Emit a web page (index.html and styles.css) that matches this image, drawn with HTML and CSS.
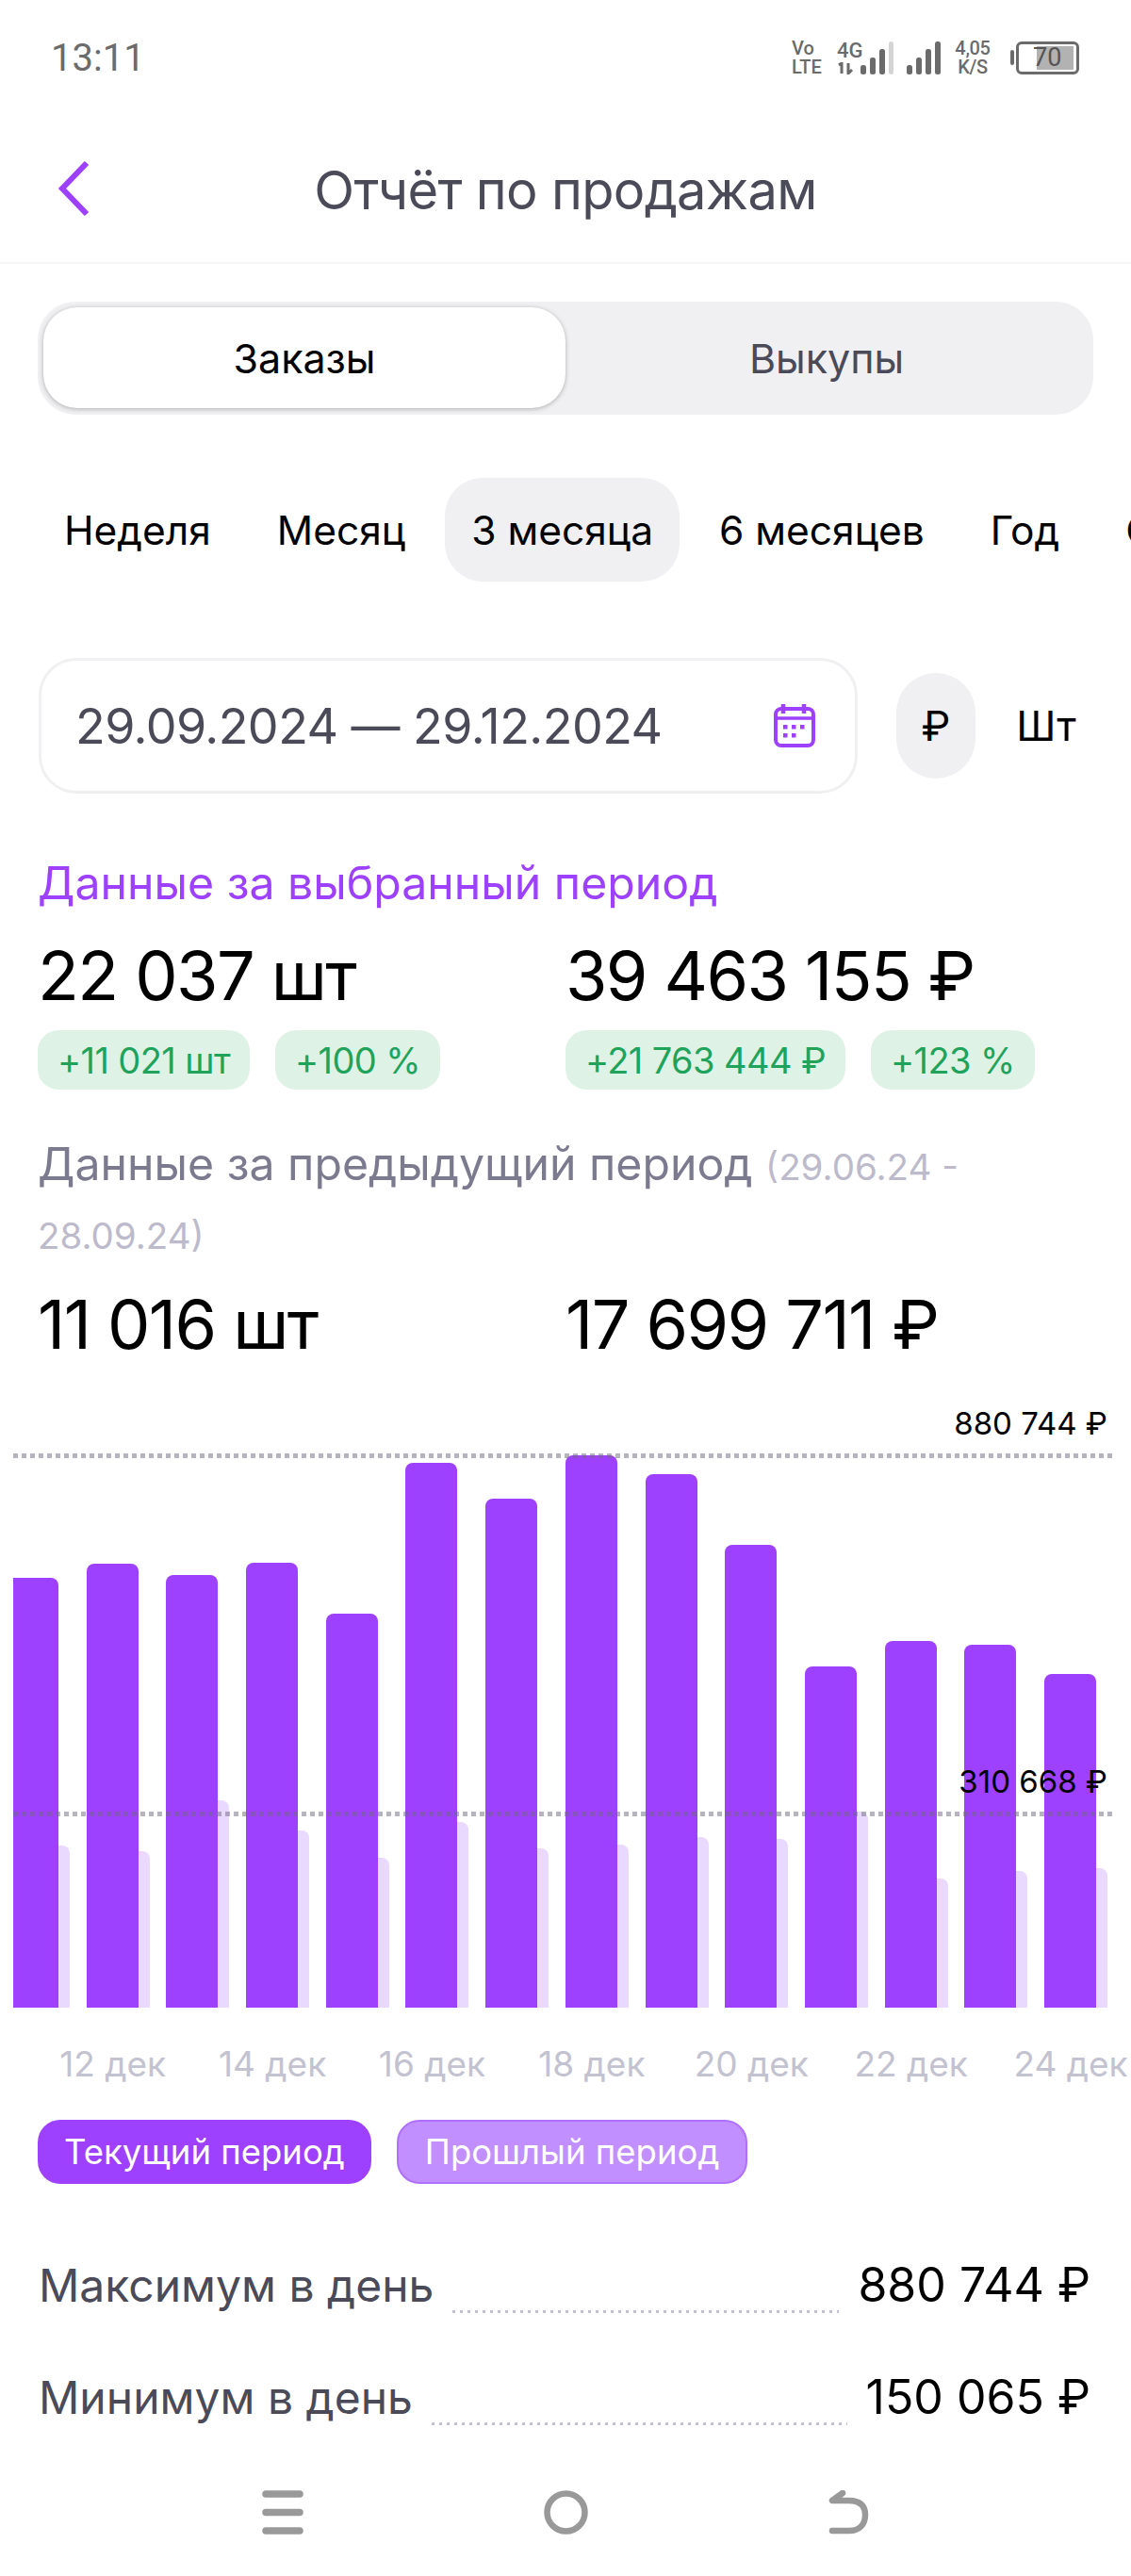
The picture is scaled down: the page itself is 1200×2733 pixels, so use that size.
FILE: index.html
```html
<!DOCTYPE html>
<html lang="ru">
<head>
    <meta charset="UTF-8">
    <meta name="viewport" content="width=device-width, initial-scale=1.0">
    <title>Отчёт по продажам</title>
    <link rel="stylesheet" href="styles.css">
</head>
<body>
    <div class="page">

        <div class="statusbar">
            <span class="time">13:11</span>
            <div class="status-icons">
                <div class="stack volte"><span>Vo</span><span>LTE</span></div>
                <div class="stack net">
                    <span>4G</span>
                    <svg width="18" height="13" viewBox="0 0 18 13"><path d="M2 3l3-2v11M12 1v11l4-4" fill="none" stroke="#6b6b6b" stroke-width="3"/></svg>
                </div>
                <svg class="signal-a" width="36" height="35" viewBox="0 0 36 35">
                    <rect x="0" y="25" width="6" height="10" rx="2.5" fill="#6b6b6b"/>
                    <rect x="10" y="17" width="6" height="18" rx="2.5" fill="#6b6b6b"/>
                    <rect x="20" y="8" width="6" height="27" rx="2.5" fill="#6b6b6b"/>
                    <rect x="30" y="0" width="5" height="35" rx="2.5" fill="#d4d4d4"/>
                </svg>
                <svg class="signal-b" width="36" height="35" viewBox="0 0 36 35">
                    <rect x="0" y="25" width="6" height="10" rx="2.5" fill="#6b6b6b"/>
                    <rect x="10" y="17" width="6" height="18" rx="2.5" fill="#6b6b6b"/>
                    <rect x="20" y="8" width="6" height="27" rx="2.5" fill="#6b6b6b"/>
                    <rect x="30" y="0" width="6" height="35" rx="2.5" fill="#6b6b6b"/>
                </svg>
                <div class="stack speed"><span>4,05</span><span>K/S</span></div>
                <div class="battery">
                    <span class="battery-nub"></span>
                    <div class="battery-body">
                        <span class="battery-fill"></span>
                        <span class="battery-text">70</span>
                    </div>
                </div>
            </div>
        </div>

        <div class="topbar">
            <svg class="back" width="34" height="58" viewBox="0 0 34 58"><path d="M31 2L5 29l26 27" fill="none" stroke="#9d41ff" stroke-width="6"/></svg>
            <h1>Отчёт по продажам</h1>
        </div>

        <div class="segment">
            <div class="segment-item active">Заказы</div>
            <div class="segment-item">Выкупы</div>
        </div>

        <div class="periods">
            <div class="period">Неделя</div>
            <div class="period">Месяц</div>
            <div class="period active">3 месяца</div>
            <div class="period">6 месяцев</div>
            <div class="period">Год</div>
            <div class="period">Свой</div>
        </div>

        <div class="filters">
            <div class="datebox">
                <span class="dates">29.09.2024 — 29.12.2024</span>
                <svg width="46" height="46" viewBox="0 0 46 46">
                    <rect x="3" y="5" width="40" height="39" rx="6" fill="none" stroke="#9d41ff" stroke-width="4"/>
                    <path d="M3 15h40" stroke="#9d41ff" stroke-width="3.500"/>
                    <path d="M11 0v10M33 0v10" stroke="#9d41ff" stroke-width="4.500"/>
                    <path d="M11 22h4.500v4.500H11zM20 22h4.500v4.500H20zM29 22h4.500v4.500H29zM11 31h4.500v4.500H11zM20 31h4.500v4.500H20z" fill="#9d41ff"/>
                </svg>
            </div>
            <div class="unit active">₽</div>
            <div class="unit">Шт</div>
        </div>

        <h2 class="section-title current">Данные за выбранный период</h2>
        <div class="stats">
            <div class="stat">
                <div class="stat-value">22 037 шт</div>
                <div class="badges">
                    <span class="badge">+11 021 шт</span>
                    <span class="badge">+100 %</span>
                </div>
            </div>
            <div class="stat">
                <div class="stat-value">39 463 155 ₽</div>
                <div class="badges">
                    <span class="badge">+21 763 444 ₽</span>
                    <span class="badge">+123 %</span>
                </div>
            </div>
        </div>

        <h2 class="section-title previous">Данные за предыдущий период <span class="range">(29.06.24 - 28.09.24)</span></h2>
        <div class="stats prev-stats">
            <div class="stat-value">11 016 шт</div>
            <div class="stat-value">17 699 711 ₽</div>
        </div>

        <div class="chart">
            <div class="bars">
                <div class="group" style="height:456px"><i style="height:172px"></i><b></b></div>
                <div class="group" style="height:471px"><i style="height:166px"></i><b></b></div>
                <div class="group" style="height:459px"><i style="height:220px"></i><b></b></div>
                <div class="group" style="height:472px"><i style="height:188px"></i><b></b></div>
                <div class="group" style="height:418px"><i style="height:159px"></i><b></b></div>
                <div class="group" style="height:578px"><i style="height:197px"></i><b></b></div>
                <div class="group" style="height:540px"><i style="height:169px"></i><b></b></div>
                <div class="group" style="height:586px"><i style="height:173px"></i><b></b></div>
                <div class="group" style="height:566px"><i style="height:181px"></i><b></b></div>
                <div class="group" style="height:491px"><i style="height:179px"></i><b></b></div>
                <div class="group" style="height:362px"><i style="height:208px"></i><b></b></div>
                <div class="group" style="height:389px"><i style="height:137px"></i><b></b></div>
                <div class="group" style="height:385px"><i style="height:145px"></i><b></b></div>
                <div class="group" style="height:354px"><i style="height:148px"></i><b></b></div>
            </div>
            <div class="gridline top"><span>880 744 ₽</span></div>
            <div class="gridline mid"><span>310 668 ₽</span></div>
        </div>

        <div class="axis">
            <span>12 дек</span>
            <span>14 дек</span>
            <span>16 дек</span>
            <span>18 дек</span>
            <span>20 дек</span>
            <span>22 дек</span>
            <span>24 дек</span>
        </div>

        <div class="legend">
            <span class="legend-item now">Текущий период</span>
            <span class="legend-item past">Прошлый период</span>
        </div>

        <div class="summary">
            <div class="summary-row">
                <span class="summary-label">Максимум в день</span>
                <span class="leader"></span>
                <span class="summary-value">880 744 ₽</span>
            </div>
            <div class="summary-row">
                <span class="summary-label">Минимум в день</span>
                <span class="leader"></span>
                <span class="summary-value">150 065 ₽</span>
            </div>
        </div>

        <div class="navbar">
            <svg width="44" height="47" viewBox="0 0 44 47"><path d="M4 4h36M4 23.500h36M4 43h36" stroke="#999" stroke-width="7.500" stroke-linecap="round"/></svg>
            <svg width="47" height="47" viewBox="0 0 47 47"><circle cx="23.500" cy="23.500" r="20" fill="none" stroke="#999" stroke-width="6.500"/></svg>
            <svg width="44" height="47" viewBox="0 0 44 47"><path d="M15 3L4 11h18c11 0 17 5 17 15s-6 17-17 17H4" fill="none" stroke="#999" stroke-width="6.500" stroke-linecap="round" stroke-linejoin="round"/></svg>
        </div>

    </div>
</body>
</html>
```

FILE: styles.css
```css
body{
    margin: 0;
    background: white;
    font-family: Inter, "Noto Sans", sans-serif;
    color: black;
}
.page{
    width: 1200px;
    height: 2733px;
    overflow: hidden;
}
h1,h2{
    margin: 0;
    font-weight: 400;
}

/* status bar */
.statusbar{
    display: flex;
    justify-content: space-between;
    align-items: center;
    height: 122px;
    padding: 0 55px 0 54px;
    font-family: Roboto, sans-serif;
    color: #6b6b6b;
}
.time{
    font-size: 40px;
    color: #6b6b6b;
}
.status-icons{
    display: flex;
    align-items: center;
    height: 40px;
}
.stack{
    display: flex;
    flex-direction: column;
    font-size: 20px;
    font-weight: 500;
    line-height: 20px;
}
.volte{
    width: 48px;
}
.net{
    width: 25px;
    font-size: 22px;
}
.net svg{
    margin-top: 2px;
}
.signal-b{
    margin-left: 13px;
}
.speed{
    align-items: center;
    margin-left: 13px;
    width: 42px;
    letter-spacing: -.3px;
}
.battery{
    display: flex;
    align-items: center;
    margin-left: 19px;
}
.battery-nub{
    width: 4px;
    height: 16px;
    margin-right: 2px;
    background: #6b6b6b;
    border-radius: 2px;
}
.battery-body{
    position: relative;
    width: 61px;
    height: 29px;
    border: 3px solid #6b6b6b;
    border-radius: 6px;
}
.battery-fill{
    position: absolute;
    left: 19px;
    top: 2px;
    width: 39px;
    height: 25px;
    background: #b2b2b2;
}
.battery-text{
    position: absolute;
    left: 15px;
    top: 0;
    font-size: 27px;
    line-height: 29px;
    color: #555;
}

/* top bar */
.topbar{
    position: relative;
    display: flex;
    justify-content: center;
    align-items: center;
    box-sizing: border-box;
    height: 158px;
    padding-top: 3px;
    border-bottom: 2px solid #f4f4f6;
}
.topbar h1{
    font-size: 56px;
    letter-spacing: -.7px;
    color: #4b4a58;
}
.back{
    position: absolute;
    left: 61px;
    top: 49px;
}

/* orders / buyouts switch */
.segment{
    display: grid;
    grid-template-columns: 1fr 1fr;
    height: 107px;
    margin: 40px 40px 0;
    padding: 6px 6px 7px;
    background: #f0f0f2;
    border-radius: 40px;
}
.segment-item{
    display: flex;
    align-items: center;
    justify-content: center;
    font-size: 43px;
    color: #4b4a58;
}
.segment-item.active{
    background: white;
    color: black;
    border-radius: 36px;
    box-shadow: 0 1px 5px rgba(0,0,0,.28);
}

/* period chips */
.periods{
    display: flex;
    gap: 14px;
    height: 110px;
    margin-top: 67px;
    padding-left: 40px;
    overflow: hidden;
}
.period{
    display: flex;
    align-items: center;
    flex: none;
    padding: 0 28px;
    font-size: 42.5px;
    border-radius: 40px;
}
.period.active{
    background: #f0f0f2;
}

/* date and unit */
.filters{
    display: flex;
    align-items: center;
    margin: 81px 0 0 41px;
}
.datebox{
    display: flex;
    align-items: center;
    justify-content: space-between;
    box-sizing: border-box;
    width: 869px;
    height: 144px;
    padding: 0 41px 0 36px;
    border: 3px solid #f0f0f2;
    border-radius: 40px;
}
.dates{
    font-size: 52px;
    letter-spacing: -.55px;
    color: #4b4a58;
}
.unit{
    display: flex;
    align-items: center;
    justify-content: center;
    width: 84px;
    height: 112px;
    margin-left: 33px;
    font-size: 44px;
    border-radius: 42px;
}
.unit.active{
    margin-left: 41px;
    background: #f0f0f2;
}

/* totals */
.section-title{
    margin: 0 40px;
    font-size: 48.2px;
    line-height: 70px;
}
.section-title.current{
    margin-top: 60px;
    color: #9d41ff;
}
.section-title.previous{
    margin-top: 44px;
    color: #7c7a8e;
}
.range{
    font-size: 38.5px;
    color: #bcbacb;
}
.stats{
    display: grid;
    grid-template-columns: 560px 560px;
    margin: 23px 0 0 40px;
}
.prev-stats{
    margin-top: 19px;
}
.stat-value{
    font-size: 72px;
    line-height: 80px;
    letter-spacing: -1.6px;
}
.badges{
    display: flex;
    gap: 27px;
    margin-top: 18px;
}
.badge{
    display: flex;
    align-items: center;
    height: 63px;
    padding: 0 21px;
    font-size: 38px;
    letter-spacing: -.6px;
    color: #1fa35a;
    background: #dff2e6;
    border-radius: 22px;
}

/* chart */
.chart{
    position: relative;
    width: 1169px;
    height: 640px;
    margin: 45px 0 0 14px;
    overflow: hidden;
}
.bars{
    display: flex;
    align-items: flex-end;
    gap: 29.7px;
    height: 100%;
    margin-left: -7px;
}
.group{
    position: relative;
    flex: none;
    width: 55px;
}
.group b{
    position: absolute;
    left: 0;
    bottom: 0;
    width: 55px;
    height: 100%;
    background: #9d41ff;
    border-radius: 8px 8px 0 0;
}
.group i{
    position: absolute;
    left: 12px;
    bottom: 0;
    width: 55px;
    background: #ead9ff;
    border-radius: 8px 8px 0 0;
}
.gridline{
    position: absolute;
    left: 0;
    right: 0;
    height: 5px;
    background: repeating-linear-gradient(90deg, rgba(110,105,125,.5) 0 5px, transparent 5px 9px);
}
.gridline.top{
    top: 52px;
}
.gridline.mid{
    top: 432px;
}
.gridline span{
    position: absolute;
    right: 8px;
    bottom: 17px;
    font-size: 33px;
    line-height: 40px;
}
.axis{
    display: flex;
    margin-top: 38px;
    padding-left: 35px;
    font-size: 37px;
    line-height: 44px;
    color: #c3c2d0;
    overflow: hidden;
}
.axis span{
    flex: 0 0 169.4px;
    text-align: center;
    white-space: nowrap;
}
.legend{
    display: flex;
    gap: 27px;
    margin: 37px 0 0 40px;
}
.legend-item{
    display: flex;
    align-items: center;
    box-sizing: border-box;
    height: 68px;
    padding: 0 28px;
    font-size: 36.5px;
    color: white;
    border-radius: 24px;
}
.legend-item.now{
    background: #9d41ff;
}
.legend-item.past{
    background: #c18fff;
    border: 2px solid #b070ff;
}

/* max / min */
.summary{
    display: flex;
    flex-direction: column;
    gap: 49px;
    margin: 72px 43px 0 41px;
}
.summary-row{
    display: flex;
    align-items: center;
    gap: 20px;
    height: 70px;
    font-size: 48px;
}
.summary-label{
    color: #4b4a58;
}
.summary-value{
    font-size: 50px;
}
.leader{
    flex: 1;
    align-self: flex-end;
    height: 3px;
    margin-bottom: 5px;
    background: repeating-linear-gradient(90deg, #c3c2d0 0 3px, transparent 3px 8px);
}

/* android nav */
.navbar{
    display: flex;
    justify-content: center;
    gap: 255px;
    margin-top: 64px;
}
```
